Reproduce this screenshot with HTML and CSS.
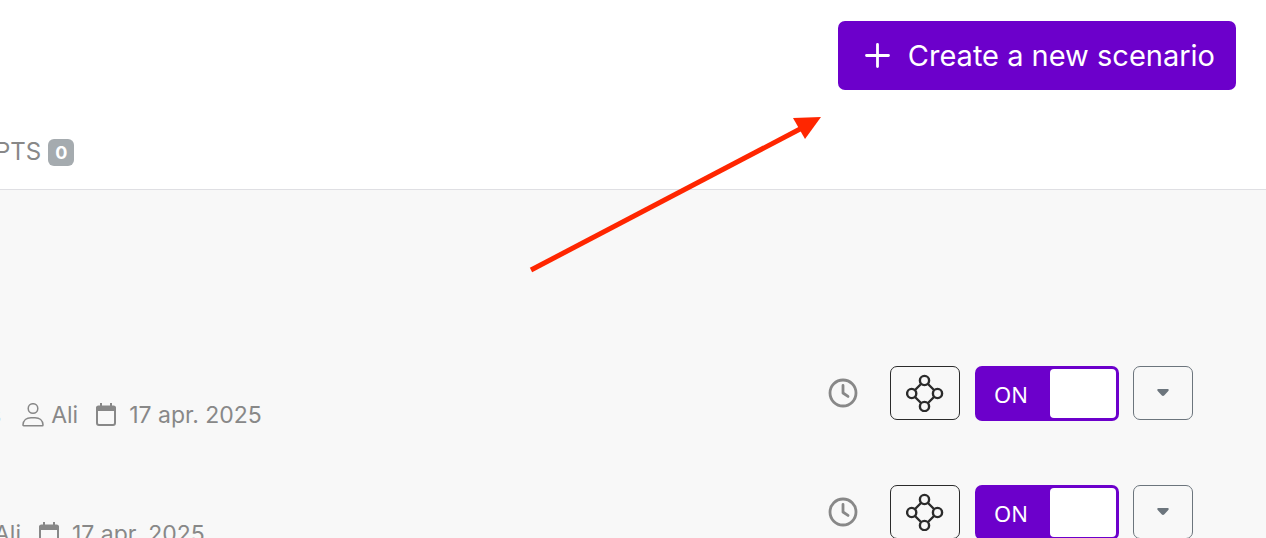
FILE: index.html
```html
<!DOCTYPE html>
<html lang="en">
<head>
  <meta charset="UTF-8">
  <meta name="viewport" content="width=device-width, initial-scale=1.0">
  <title>Scenarios</title>
  <link rel="stylesheet" href="styles.css">
</head>
<body>
  <!-- Icons used in every row -->
  <svg class="sprite" width="0" height="0" aria-hidden="true">
    <symbol id="icon-user" viewBox="0 0 22 24">
      <circle cx="11" cy="5.500" r="4.800" fill="none" stroke="currentColor" stroke-width="1.500"/>
      <path d="M1.700 22.700C1.200 22.700 1 22.400 1 21.900 1.200 17.500 4.600 14.700 9 14.700h4c4.400 0 7.800 2.800 8 7.200 0 .5-.2.8-.7.8z" fill="none" stroke="currentColor" stroke-width="1.500"/>
    </symbol>
    <symbol id="icon-calendar" viewBox="0 0 22 24">
      <rect x="2" y="4" width="18" height="18" rx="2" fill="none" stroke="currentColor" stroke-width="2"/>
      <path d="M1 8V5a2.500 2.500 0 0 1 2.500-2.500H5V0h2v2.500h8V0h2v2.500h1.500A2.500 2.500 0 0 1 21 5v3z" fill="currentColor"/>
    </symbol>
    <symbol id="icon-clock" viewBox="0 0 30 30">
      <circle cx="15" cy="15" r="13" fill="none" stroke="currentColor" stroke-width="2.800"/>
      <path d="M15 7.500V15l5 3.400" fill="none" stroke="currentColor" stroke-width="2.800" stroke-linecap="round" stroke-linejoin="round"/>
    </symbol>
    <symbol id="icon-nodes" viewBox="0 0 38 38">
      <g fill="none" stroke="currentColor" stroke-width="2.400">
        <circle cx="18.500" cy="6.500" r="4.600"/>
        <circle cx="5.700" cy="19.500" r="4.600"/>
        <circle cx="31.500" cy="19.500" r="4.600"/>
        <circle cx="18.500" cy="32.500" r="4.600"/>
        <path d="M15 10l-6 6M22 10l6 6M9 23l6 6M28 23l-6 6"/>
      </g>
    </symbol>
    <symbol id="icon-caret" viewBox="0 0 12 8">
      <path d="M1.500 0h9c1.200 0 1.600 1 .8 1.900L7.400 6.200c-.9 1-1.900 1-2.800 0L.7 1.900C-.1 1 .3 0 1.500 0z" fill="currentColor"/>
    </symbol>
  </svg>

  <header class="header">
    <div class="header-actions">
      <button class="create-btn" type="button">
        <svg width="25" height="25" viewBox="0 0 25 25" aria-hidden="true">
          <path d="M12.500 1.500v22M1.500 12.500h22" stroke="currentColor" stroke-width="2.800" stroke-linecap="round"/>
        </svg>
        Create a new scenario
      </button>
    </div>
    <nav class="tabs">
      <a class="tab" href="#">PTS <span class="badge">0</span></a>
    </nav>
  </header>

  <main class="scenarios">
    <div class="scenario">
      <div class="meta">
        <span class="meta-tag">s</span>
        <span class="meta-item"><svg width="22" height="24"><use href="#icon-user"/></svg>Ali</span>
        <span class="meta-item meta-date"><svg width="22" height="24"><use href="#icon-calendar"/></svg>17 apr. 2025</span>
      </div>
      <div class="controls">
        <svg class="clock" width="30" height="30"><use href="#icon-clock"/></svg>
        <button class="icon-btn" type="button" aria-label="Diagram"><svg width="38" height="38"><use href="#icon-nodes"/></svg></button>
        <label class="toggle"><input type="checkbox" checked><span class="toggle-text">ON</span><span class="toggle-knob"></span></label>
        <button class="icon-btn menu-btn" type="button" aria-label="More"><svg width="12" height="8"><use href="#icon-caret"/></svg></button>
      </div>
    </div>

    <div class="scenario">
      <div class="meta meta-cut">
        <span class="meta-item">Ali</span>
        <span class="meta-item meta-date"><svg width="22" height="24"><use href="#icon-calendar"/></svg>17 apr. 2025</span>
      </div>
      <div class="controls">
        <svg class="clock" width="30" height="30"><use href="#icon-clock"/></svg>
        <button class="icon-btn" type="button" aria-label="Diagram"><svg width="38" height="38"><use href="#icon-nodes"/></svg></button>
        <label class="toggle"><input type="checkbox" checked><span class="toggle-text">ON</span><span class="toggle-knob"></span></label>
        <button class="icon-btn menu-btn" type="button" aria-label="More"><svg width="12" height="8"><use href="#icon-caret"/></svg></button>
      </div>
    </div>
  </main>

  <!-- Arrow pointing at the create button -->
  <svg class="arrow" width="310" height="175" viewBox="0 0 310 175" aria-hidden="true">
    <path d="M11 165L282 23" stroke="#ff2600" stroke-width="5"/>
    <path d="M301 12l-28 1 12 21z" fill="#ff2600"/>
  </svg>
</body>
</html>
```
FILE: styles.css
```css
* {
  box-sizing: border-box;
}

body {
  margin: 0;
  height: 100vh;
  overflow: hidden;
  background: #f8f8f8;
  font-family: Inter, "Liberation Sans", sans-serif;
  font-size: 23px;
  color: #888;
}

button {
  font: inherit;
  cursor: pointer;
}

svg {
  flex: none;
}

.sprite {
  display: block;
}

/* Header */
.header {
  background: #fff;
  border-bottom: 1px solid #dfdfe3;
}

.header-actions {
  display: flex;
  justify-content: flex-end;
  padding: 21px 30px 0;
}

.create-btn {
  display: flex;
  align-items: center;
  gap: 18px;
  height: 69px;
  padding: 0 21px 0 27px;
  border: 0;
  border-radius: 7px;
  background: #6c00cb;
  color: #fff;
  font-size: 29px;
}

.tabs {
  display: flex;
  padding: 44px 0 21px;
}

.tab {
  display: flex;
  align-items: center;
  gap: 7px;
  height: 34px;
  margin-left: -5px;
  color: #888;
  font-size: 24px;
  text-decoration: none;
}

.badge {
  width: 26px;
  margin-top: 2px;
  border-radius: 6px;
  background: #a5abaf;
  color: #fff;
  font-size: 18px;
  font-weight: 700;
  line-height: 27px;
  text-align: center;
}

/* Scenario list */
.scenarios {
  padding: 176px 73px 0 0;
}

.scenario {
  display: flex;
  justify-content: space-between;
  height: 119px;
}

.meta {
  display: flex;
  align-items: center;
  gap: 17px;
  height: 28px;
  margin: 35px 0 0 -11px;
}

.meta-cut {
  margin-left: -6px;
}

.meta-tag {
  margin-right: 4px;
}

.meta-item {
  display: flex;
  align-items: center;
  gap: 7px;
}

.meta-date {
  gap: 12px;
}

.controls {
  display: flex;
  align-items: flex-start;
  gap: 14px;
}

.clock {
  margin: 12px 18px 0 0;
}

.icon-btn {
  display: flex;
  align-items: center;
  justify-content: center;
  width: 70px;
  height: 54px;
  padding: 0;
  border: 1px solid #2b2b2b;
  border-radius: 7px;
  background: transparent;
  color: #2b2b2b;
}

.menu-btn {
  width: 60px;
  border-color: #6c757d;
  color: #6c757d;
}

.toggle {
  display: flex;
  width: 144px;
  height: 55px;
  margin-left: 1px;
  padding: 3px;
  border-radius: 7px;
  background: #6c00cb;
  color: #fff;
  cursor: pointer;
}

.toggle input {
  position: absolute;
  opacity: 0;
}

.toggle-text {
  flex: 1;
  padding-right: 6px;
  font-family: "Noto Sans", sans-serif;
  font-size: 22px;
  line-height: 50px;
  text-align: center;
}

.toggle-knob {
  width: 66px;
  border-radius: 4px;
  background: #fff;
}

/* Lies over the header and the list */
.arrow {
  position: absolute;
  top: 105px;
  left: 520px;
  pointer-events: none;
}
```
